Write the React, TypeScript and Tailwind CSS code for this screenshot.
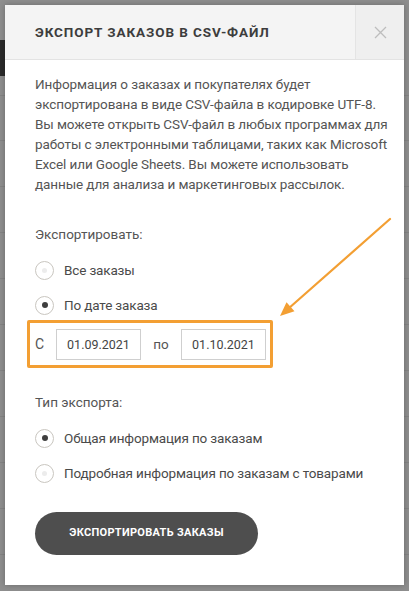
import { useState } from "react";

const font = { fontFamily: 'Roboto, "Noto Sans", sans-serif' };

const introLines = [
  "Информация о заказах и покупателях будет",
  "экспортирована в виде CSV-файла в кодировке UTF-8.",
  "Вы можете открыть CSV-файл в любых программах для",
  "работы с электронными таблицами, таких как Microsoft",
  "Excel или Google Sheets. Вы можете использовать",
  "данные для анализа и маркетинговых рассылок.",
];

// radio button like the shop admin style
const Radio = ({ checked, label }: { checked: boolean; label: string }) => (
  <label className="flex items-center gap-[10px] h-[20px] cursor-pointer">
    <span className="w-[19px] h-[19px] rounded-full border border-[#c9c6c0] bg-white flex items-center justify-center shrink-0">
      <span
        className={
          checked
            ? "w-[6px] h-[6px] rounded-full bg-[#3f3f3f]"
            : "w-[5px] h-[5px] rounded-full bg-[#ececec]"
        }
      />
    </span>
    <span className="text-[13.5px] text-[#4a4a4a] whitespace-nowrap tracking-[-0.15px]">{label}</span>
  </label>
);

const App = () => {
  const [from] = useState("01.09.2021");
  const [to] = useState("01.10.2021");

  // rows of the page behind the overlay
  const rowLines = [95, 140, 186, 232, 278, 324, 370, 416, 462, 508, 554];

  return (
    <div className="relative w-[409px] h-[591px] overflow-hidden bg-[#8e8e8e]" style={font}>
      {/* page behind */}
      <div className="absolute left-0 top-[40px] w-[5px] h-[36px] bg-[#2a2a2a]" />
      {rowLines.map((y) => (
        <div key={y} className="absolute left-0 w-full h-px bg-[#838383]" style={{ top: y }} />
      ))}

      <div className="relative ml-[5px] mt-[5px] w-[399px] h-[580px] bg-white shadow-[0_0_6px_rgba(0,0,0,0.25)] flex flex-col">
        {/* header */}
        <div className="flex h-[55px] bg-[#f4f4f4] border-b border-[#e3e3e3] shrink-0">
          <div className="flex-1 flex items-center pl-[30px]">
            <h1 className="text-[13.5px] font-bold tracking-[0.9px] text-[#3d3d3d] uppercase">
              Экспорт заказов в CSV-файл
            </h1>
          </div>
          <button className="w-[49px] flex items-center justify-center border-l border-[#e4e4e4] bg-[#efefef]">
            <svg width="13" height="13" viewBox="0 0 13 13">
              <path d="M1 1L12 12M12 1L1 12" stroke="#bdbdbd" strokeWidth="1.3" />
            </svg>
          </button>
        </div>

        {/* body */}
        <div className="relative px-[30px] pt-[14px]">
          <p className="text-[13.5px] leading-[20px] text-[#555] tracking-[-0.1px] whitespace-nowrap">
            {introLines.map((line) => (
              <span key={line} className="block">
                {line}
              </span>
            ))}
          </p>

          <div className="mt-[30px] text-[13.5px] text-[#555] leading-[20px]">Экспортировать:</div>
          <div className="mt-[16px] flex flex-col gap-[15px]">
            <Radio checked={false} label="Все заказы" />
            <Radio checked label="По дате заказа" />
          </div>

          {/* date range, highlighted */}
          <div className="mt-[5px] -ml-[8px] w-[246px] h-[48px] border-[3px] border-[#f39f33] rounded-[2px] flex items-center pl-[5px]">
            <span className="text-[14px] text-[#555] w-[21px]">С</span>
            <input
              readOnly
              value={from}
              className="w-[85px] h-[31px] border border-[#cfcfcf] text-center text-[12.5px] text-[#444] outline-none"
            />
            <span className="text-[13.5px] text-[#555] w-[40px] text-center">по</span>
            <input
              readOnly
              value={to}
              className="w-[85px] h-[31px] border border-[#cfcfcf] text-center text-[12.5px] text-[#444] outline-none"
            />
          </div>

          {/* annotation arrow */}
          <svg className="absolute left-[270px] top-[150px]" width="125" height="115" viewBox="0 0 125 115">
            <path d="M115 9L15.5 96.8" stroke="#f39f33" strokeWidth="2.2" strokeLinecap="round" />
            <path d="M5 106L19.5 101.3L11.5 92.3Z" fill="#f39f33" />
          </svg>

          <div className="mt-[24px] text-[13.5px] text-[#555] leading-[20px]">Тип экспорта:</div>
          <div className="mt-[16px] flex flex-col gap-[15px]">
            <Radio checked label="Общая информация по заказам" />
            <Radio checked={false} label="Подробная информация по заказам с товарами" />
          </div>

          <button className="mt-[29px] w-[223px] h-[43px] rounded-full bg-[#4e4e4e] text-white text-[11px] font-bold uppercase tracking-[0.3px]">
            Экспортировать заказы
          </button>
        </div>
      </div>
    </div>
  );
};

export default App;
